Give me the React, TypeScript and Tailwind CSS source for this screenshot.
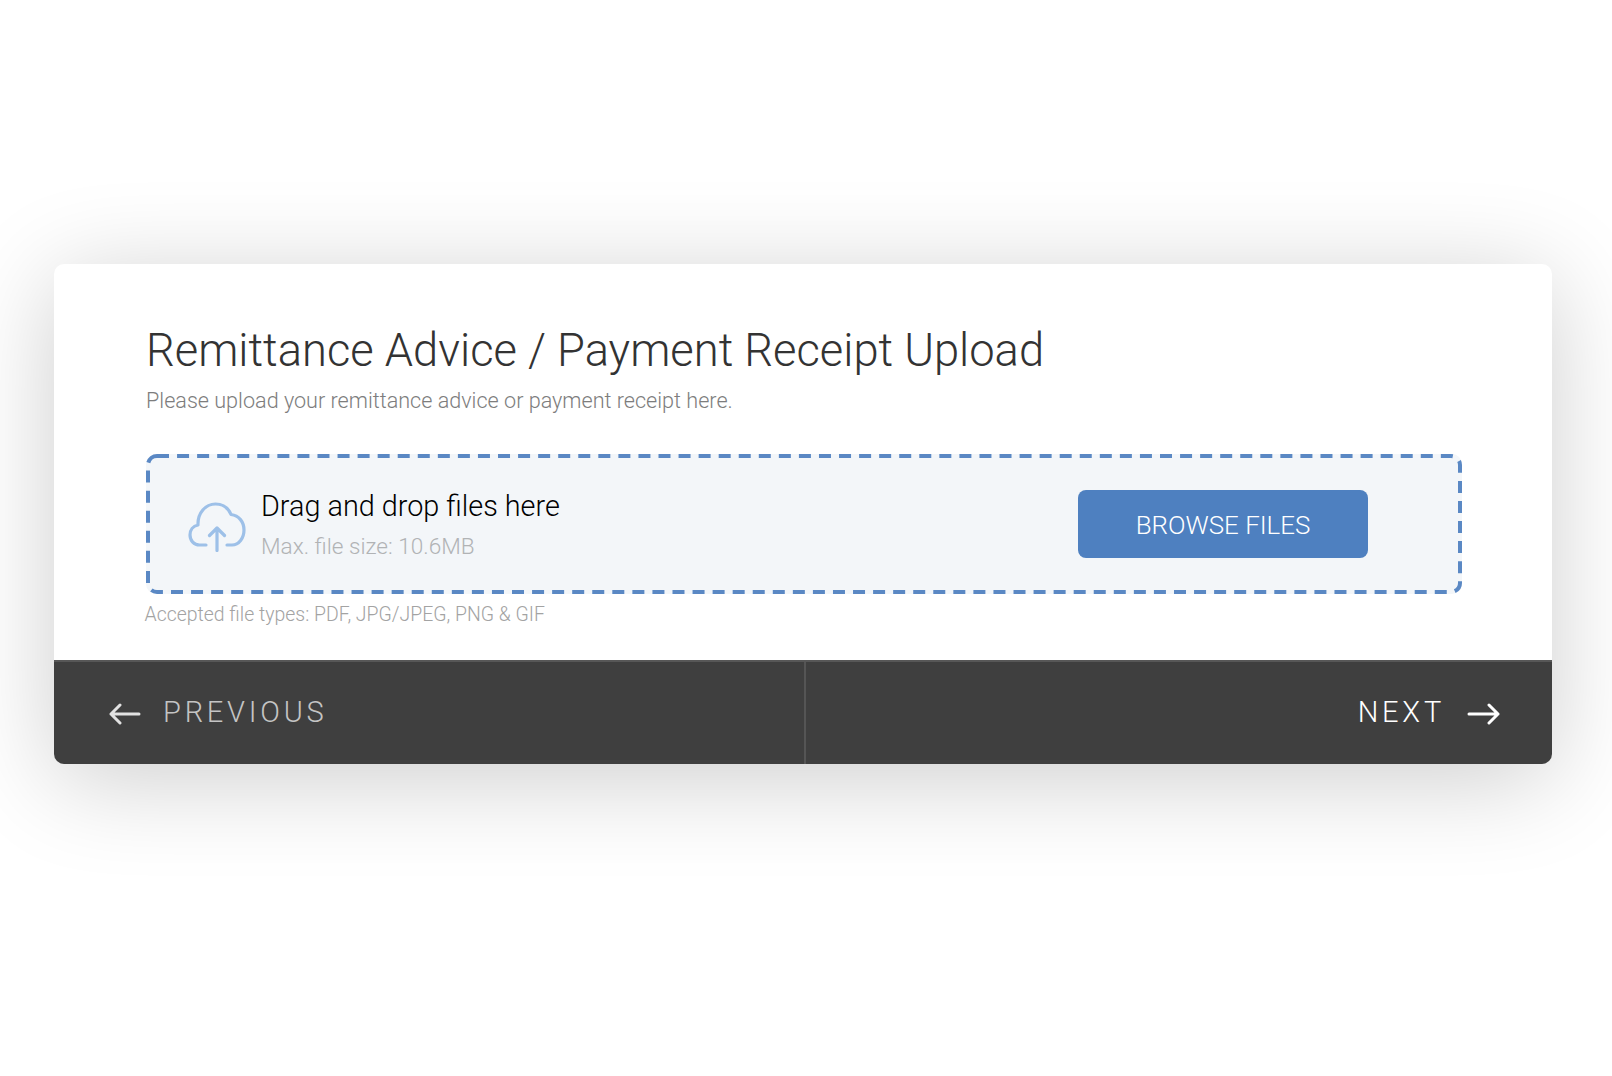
import React from "react";

function CloudUpload() {
  return (
    <svg width="60" height="52" viewBox="0 0 60 52" fill="none" stroke="#9dc0e8" strokeWidth="3.2" strokeLinecap="round" strokeLinejoin="round">
      <path d="M19 45H12.500C7 45 3 40.500 3 35C3 30 6 26 11 25C10.500 13 18.500 4 28.500 4C36 4 41.500 8.500 44 14.500C52 15.500 57 22 57 30C57 38 52 45 45 45H40" />
      <path d="M30 50.500V28M22.500 35.500L30 28L37.500 35.500" />
    </svg>
  );
}

function ArrowLeft() {
  return (
    <svg className="mt-[2px]" width="32" height="22" viewBox="0 0 32 22" fill="none" stroke="#e2e2e2" strokeWidth="3" strokeLinecap="round" strokeLinejoin="round">
      <path d="M2 11H30M11 2L2 11L11 20" />
    </svg>
  );
}

function ArrowRight() {
  return (
    <svg className="mt-[2px]" width="33" height="22" viewBox="0 0 33 22" fill="none" stroke="#ffffff" strokeWidth="3" strokeLinecap="round" strokeLinejoin="round">
      <path d="M2 11H31M22 2L31 11L22 20" />
    </svg>
  );
}

export default function App() {
  return (
    <div className="min-h-[1076px] bg-white pt-[264px] pl-[54px] font-['Roboto',sans-serif]">
      <div className="w-[1498px] rounded-[10px] bg-white shadow-[0_15px_100px_rgba(0,0,0,0.2)]">
        <div className="h-[396px] pt-[60px] pl-[92px]">
          <h1 className="text-[45.3px] leading-[54px] font-light text-[#333333]">
            Remittance Advice / Payment Receipt Upload
          </h1>
          <p className="mt-[9px] text-[21.6px] leading-[28px] font-light text-[#7d7d7d]">
            Please upload your remittance advice or payment receipt here.
          </p>

          <div className="relative mt-[39px] flex h-[140px] w-[1316px] items-center justify-between rounded-[10px] bg-[#f3f6f9] pr-[94px] pl-[41px]">
            <svg className="absolute inset-0" width="1316" height="140" fill="none">
              <rect x="2" y="2" width="1312" height="136" rx="9" stroke="#5a88c4" strokeWidth="4" strokeDasharray="12 8.06" />
            </svg>
            <div className="flex items-center gap-[14px]">
              <div className="mt-[4px]">
                <CloudUpload />
              </div>
              <div>
                <div className="text-[28.8px] leading-[36px] font-light text-black">Drag and drop files here</div>
                <div className="mt-[9px] text-[22.6px] leading-[28px] font-light text-[#b1b3b5]">Max. file size: 10.6MB</div>
              </div>
            </div>
            <button className="h-[68px] w-[290px] rounded-[8px] bg-[#4e80c0] pt-[2px] text-[25.9px] font-light text-white">
              BROWSE FILES
            </button>
          </div>

          <p className="mt-[9px] -ml-[1.500px] text-[19.45px] leading-[24px] font-light text-[#a3a3a3]">
            Accepted file types: PDF, JPG/JPEG, PNG &amp; GIF
          </p>
        </div>

        <div className="flex h-[104px] rounded-b-[10px] border-t-2 border-t-[#575757] bg-[#3f3f3f]">
          <div className="flex w-[752px] items-center gap-[22px] border-r-2 border-r-[#555555] pl-[55px]">
            <ArrowLeft />
            <span className="text-[29px] font-light tracking-[0.13em] text-[#c4c4c4]">PREVIOUS</span>
          </div>
          <div className="flex flex-1 items-center justify-end gap-[22px] pr-[52px]">
            <span className="text-[29px] font-light tracking-[0.13em] text-white">NEXT</span>
            <ArrowRight />
          </div>
        </div>
      </div>
    </div>
  );
}
